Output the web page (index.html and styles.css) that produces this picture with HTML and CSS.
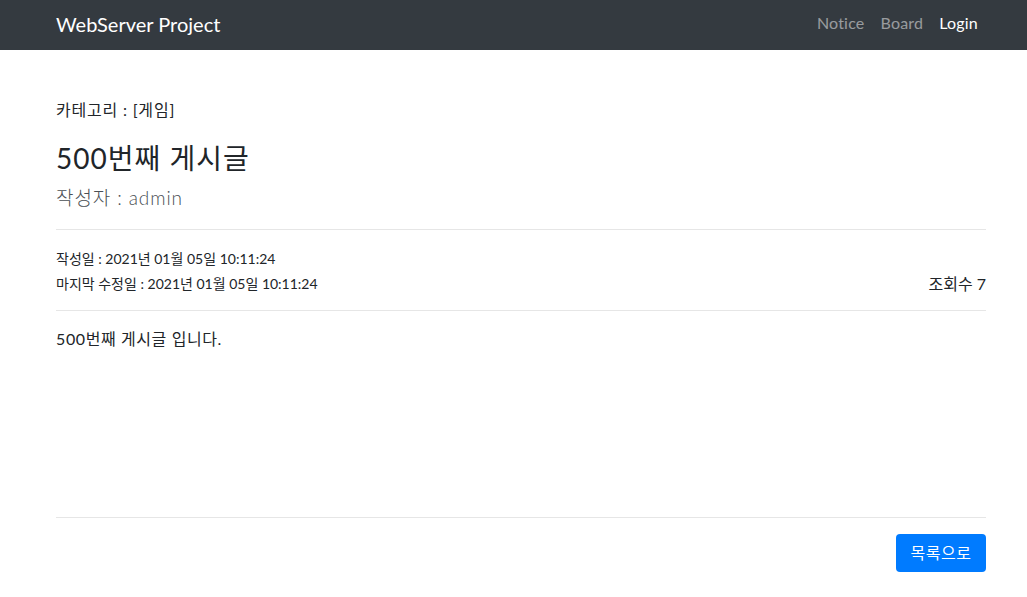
FILE: index.html
```html
<!DOCTYPE html>
<html lang="ko">
<head>
<meta charset="utf-8">
<title>WebServer Project</title>
<link rel="stylesheet" href="styles.css">
</head>
<body>
<nav class="navbar">
  <div class="nav-inner">
    <a class="brand" href="#">WebServer Project</a>
    <ul class="nav-links">
      <li><a class="nav-link" href="#">Notice</a></li>
      <li><a class="nav-link" href="#">Board</a></li>
      <li><a class="nav-link active" href="#">Login</a></li>
    </ul>
  </div>
</nav>
<main class="container">
  <p class="category">카테고리 : [게임]</p>
  <h3 class="title">500번째 게시글</h3>
  <p class="author">작성자 : admin</p>
  <hr class="divider">
  <div class="meta">
    <div class="dates">
      <div class="date">작성일 : 2021년 01월 05일 10:11:24</div>
      <div class="date">마지막 수정일 : 2021년 01월 05일 10:11:24</div>
    </div>
    <div class="views">조회수 7</div>
  </div>
  <hr class="divider divider-meta">
  <div class="content">500번째 게시글 입니다.</div>
  <hr class="divider">
  <div class="actions">
    <a class="btn-primary" href="#">목록으로</a>
  </div>
</main>
</body>
</html>
```

FILE: styles.css
```css
* { box-sizing: border-box; }
html, body { margin: 0; padding: 0; }
body {
  font-family: Lato, "Noto Sans CJK KR", sans-serif;
  font-size: 16px;
  line-height: 1.5;
  color: #212529;
  background: #fff;
}
a { text-decoration: none; }

.navbar {
  background: #343a40;
  height: 50px;
}
.nav-inner {
  width: 930px;
  margin: 0 0 0 56px;
  height: 50px;
  display: flex;
  align-items: center;
  justify-content: space-between;
}
.brand {
  color: #fff;
  font-size: 20px;
  line-height: 30px;
  margin-top: -3px;
}
.nav-links {
  list-style: none;
  margin: 0;
  padding: 0;
  display: flex;
}
.nav-link {
  display: block;
  padding: 8px;
  color: rgba(255,255,255,.5);
  font-size: 16px;
  line-height: 24px;
  margin-top: -4px;
  letter-spacing: 0.2px;
}
.nav-link.active { color: #fff; }

.container {
  width: 930px;
  margin-left: 56px;
  padding-top: 48px;
}
.category {
  margin: 0;
  line-height: 24px;
  letter-spacing: 0.8px;
}
.title {
  margin: 19px 0 0;
  font-size: 28px;
  font-weight: 400;
  line-height: 34px;
  letter-spacing: 1px;
}
.author {
  margin: 8px 0 0;
  font-size: 19px;
  line-height: 30px;
  color: #4a4f54;
  font-weight: 300;
  letter-spacing: 0.9px;
}
.divider {
  border: 0;
  border-top: 1px solid #e6e6e6;
  margin: 16px 0 0;
  height: 0;
}
.meta {
  display: flex;
  justify-content: space-between;
  align-items: flex-end;
  margin-top: 16px;
}
.date {
  font-size: 14px;
  line-height: 25px;
}
.views {
  font-size: 16px;
  line-height: 25px;
}
.divider-meta { margin-top: 14px; }
.content {
  margin-top: 16px;
  line-height: 24px;
  min-height: 174px;
  letter-spacing: 0.6px;
}
.actions {
  display: flex;
  justify-content: flex-end;
  margin-top: 16px;
}
.btn-primary {
  display: inline-block;
  background: #007bff;
  color: #fff;
  border-radius: 4px;
  padding: 6px 12px;
  font-size: 16px;
  line-height: 26px;
  height: 38px;
  width: 90px;
  text-align: center;
  letter-spacing: 0.5px;
}
```
